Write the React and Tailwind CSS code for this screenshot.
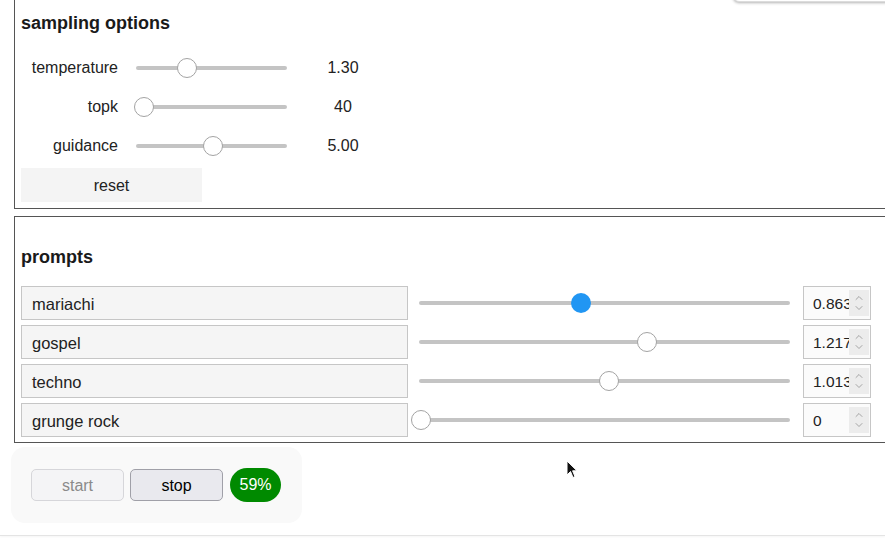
import { ChevronUp, ChevronDown } from "lucide-react";

const samplingOptions = [
  { label: "temperature", value: "1.30", pos: 51 },
  { label: "topk", value: "40", pos: 8 },
  { label: "guidance", value: "5.00", pos: 77 },
];

const prompts = [
  { text: "mariachi", weight: "0.863", pos: 162, active: true },
  { text: "gospel", weight: "1.217", pos: 228 },
  { text: "techno", weight: "1.013", pos: 190 },
  { text: "grunge rock", weight: "0", pos: 2 },
];

const Thumb = ({ pos, active }) => (
  <div
    className={
      active
        ? "absolute top-1/2 size-[20px] -translate-x-1/2 -translate-y-1/2 rounded-full bg-[#2196f3]"
        : "absolute top-1/2 size-[20px] -translate-x-1/2 -translate-y-1/2 rounded-full border border-[#a3a3a3] bg-white"
    }
    style={{ left: pos }}
  />
);

const App = () => {
  return (
    <div className="relative h-[542px] w-[885px] overflow-hidden bg-white font-['Liberation_Sans',Arial,sans-serif] text-[#222]">
      {/* popup edge peeking in at the top right */}
      <div className="absolute -top-[40px] left-[733px] h-[42px] w-[170px] rounded-[6px] border border-[#dcdcdc] bg-white shadow-[0_1px_3px_rgba(0,0,0,0.3)]" />

      {/* sampling options */}
      <section className="ml-[14px] w-[900px] border border-t-0 border-[#555] pb-[6px] pl-[6px] pt-[11px]">
        <h2 className="text-[18px] font-bold leading-[24px] text-[#1a1a1a]">sampling options</h2>
        <div className="mt-[13px] flex flex-col">
          {samplingOptions.map((opt) => (
            <div key={opt.label} className="flex h-[39px] items-center">
              <span className="w-[97px] pt-px text-right text-[16px]">{opt.label}</span>
              <div className="relative ml-[18px] h-[4px] w-[151px] rounded-full bg-[#c4c4c4]">
                <Thumb pos={opt.pos} />
              </div>
              <span className="w-[112px] pt-px text-center text-[16px]">{opt.value}</span>
            </div>
          ))}
        </div>
        <button className="mt-[3px] h-[34px] w-[181px] bg-[#f4f4f4] pt-[2px] text-[16px]">reset</button>
      </section>

      {/* prompts */}
      <section className="ml-[14px] mt-[7px] w-[900px] border border-[#555] pb-[5px] pl-[6px] pt-[28px]">
        <h2 className="text-[18px] font-bold leading-[24px] text-[#1a1a1a]">prompts</h2>
        <div className="mt-[17px] flex flex-col gap-[5px]">
          {prompts.map((p) => (
            <div key={p.text} className="flex h-[34px] items-center">
              <div className="flex h-[34px] w-[387px] items-center border border-[#c6c6c6] bg-[#f5f5f5] pl-[10px] pt-[2px] text-[16.5px]">
                {p.text}
              </div>
              <div className="relative ml-[11px] h-[4px] w-[371px] rounded-full bg-[#c4c4c4]">
                <Thumb pos={p.pos} active={p.active} />
              </div>
              <div className="ml-[13px] flex h-[34px] w-[68px] items-center border border-[#c6c6c6] bg-[#fbfbfb] pl-[9px]">
                <span className="w-[36px] overflow-hidden whitespace-nowrap pt-[2px] text-[15.5px]">{p.weight}</span>
                <div className="flex h-[26px] w-[20px] flex-col items-center justify-center bg-[#ececec] text-[#8c8c8c]">
                  <ChevronUp size={12} strokeWidth={1.5} className="-mb-[2px]" />
                  <ChevronDown size={12} strokeWidth={1.5} />
                </div>
              </div>
            </div>
          ))}
        </div>
      </section>

      {/* transport */}
      <div className="ml-[11px] mt-[4px] flex h-[76px] w-[291px] items-center rounded-[14px] bg-[#f9f9f9] pl-[20px]">
        <button disabled className="h-[32px] w-[93px] rounded-[5px] border border-[#d6d6da] bg-[#f4f4f6] pt-[1px] text-[16px] text-[#8a8a8a]">
          start
        </button>
        <button className="ml-[6px] h-[32px] w-[93px] rounded-[5px] border border-[#a0a0a8] bg-[#e9e9ee] pt-[1px] text-[16px] text-black">
          stop
        </button>
        <span className="ml-[7px] flex h-[34px] w-[51px] items-center justify-center rounded-full bg-[#008a00] text-[16px] text-white">
          59%
        </span>
      </div>

      <div className="mt-[12px] h-[1px] w-full bg-[#e4e4e4] shadow-[0_1px_2px_rgba(0,0,0,0.06)]" />

      {/* mouse pointer */}
      <svg className="absolute left-[566px] top-[460px]" width="12" height="19" viewBox="0 0 12 19">
        <path d="M1 1 L1 15 L4.5 11.5 L7 17.5 L9 16.6 L6.6 10.8 L11 10.8 Z" fill="#111" stroke="#fff" strokeWidth="1" />
      </svg>
    </div>
  );
};

export default App;
